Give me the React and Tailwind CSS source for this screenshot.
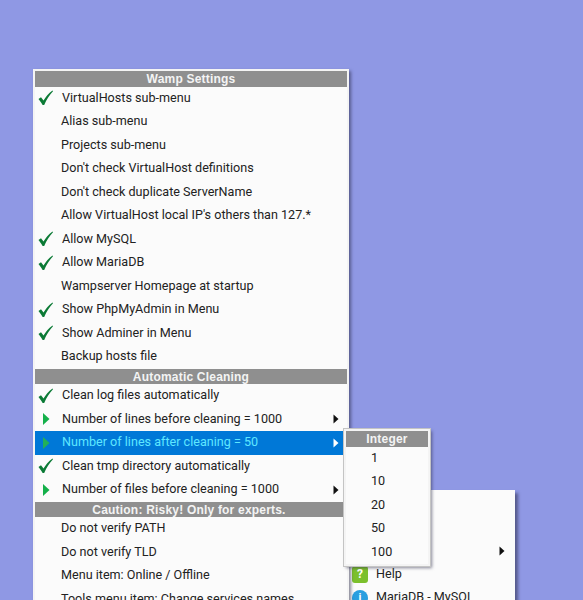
const Check = () => (
  <svg width="20" height="18" viewBox="0 0 20 18" className="block">
    <path d="M1.5 10 L4 8.2 L6.5 11.5 C8.5 8 11.5 4.5 15.5 1.5 L16 2.3 C12.5 6 9.5 10.5 7.2 16 L5.6 16 C4.6 14 3 11.8 1.5 10 Z" fill="#0b7a35" />
  </svg>
);
const Play = ({ dim }) => (
  <svg width="20" height="18" viewBox="0 0 20 18" className="block">
    <path d="M6 3 L12.5 9 L6 15 Z" fill={dim ? "#22b05a" : "#14b04a"} />
  </svg>
);
const Arrow = ({ white }) => (
  <svg width="6" height="10" viewBox="0 0 6 10" className="block">
    <path d="M0.5 0.5 L5.5 5 L0.5 9.5 Z" fill={white ? "#ffffff" : "#111111"} />
  </svg>
);

const Header = ({ children }) => (
  <div className="h-[15.5px] bg-[#8f8f8f] text-[#f4f4f4] text-center font-bold text-[12px] leading-[16px] tracking-[0.2px] font-['Liberation_Sans',sans-serif]">
    {children}
  </div>
);

const Item = ({ icon, label, arrow, active }) => (
  <div className={`h-[23.5px] flex items-center ${active ? "bg-[#0078d7] text-[#5fe7ff]" : "text-[#222222]"}`}>
    <div className="w-[26px] pl-[2px] shrink-0">
      {icon === "check" && <Check />}
      {icon === "play" && <Play dim={active} />}
    </div>
    <span className={`flex-1 whitespace-nowrap ${icon ? "pl-[1px]" : "pl-0"}`}>{label}</span>
    {arrow && <div className="pr-[4px]"><Arrow white={active} /></div>}
  </div>
);

const first = [
  ["check", "VirtualHosts sub-menu"],
  [null, "Alias sub-menu"],
  [null, "Projects sub-menu"],
  [null, "Don't check VirtualHost definitions"],
  [null, "Don't check duplicate ServerName"],
  [null, "Allow VirtualHost local IP's others than 127.*"],
  ["check", "Allow MySQL"],
  ["check", "Allow MariaDB"],
  [null, "Wampserver Homepage at startup"],
  ["check", "Show PhpMyAdmin in Menu"],
  ["check", "Show Adminer in Menu"],
  [null, "Backup hosts file"],
];

const third = ["Do not verify PATH", "Do not verify TLD", "Menu item: Online / Offline", "Tools menu item: Change services names"];

const fontCls = "font-['Roboto',sans-serif] text-[12.6px]";

export default function App() {
  return (
    <div className={`relative w-[583px] h-[600px] overflow-hidden bg-[#8f98e4] ${fontCls}`}>
      {/* Back menu */}
      <div className="absolute left-[349px] top-[490px] w-[166px] h-[130px] pt-[2px] bg-[#fbfbfb] shadow-[3px_3px_3px_rgba(40,40,70,0.55)] flex flex-col text-[#222222]">
        <div className="h-[23.5px]" />
        <div className="h-[23.5px]" />
        <div className="h-[23.5px] flex items-center justify-end pr-[10px]"><Arrow /></div>
        <div className="h-[23.5px] flex items-center gap-[8px] pl-[3px]">
          <div className="w-[16px] h-[17px] rounded-[3px] bg-[#7cc02c] flex items-center justify-center text-white font-bold text-[12px] leading-none">?</div>
          <span>Help</span>
        </div>
        <div className="h-[23.5px] flex items-center gap-[8px] pl-[3px]">
          <div className="w-[16px] h-[16px] rounded-full bg-[#2a9fe0] flex items-center justify-center text-white font-bold text-[11px] leading-none">i</div>
          <span className="whitespace-nowrap">MariaDB - MySQL</span>
        </div>
      </div>

      {/* Main menu */}
      <div className="absolute left-[33px] top-[69px] w-[316px] h-[560px] bg-[#fbfbfb] border-2 border-[#f4f4f4] shadow-[2px_2px_3px_rgba(40,40,70,0.55)]">
        <Header>Wamp Settings</Header>
        {first.map(([icon, label]) => (
          <Item key={label} icon={icon} label={label} />
        ))}
        <Header>Automatic Cleaning</Header>
        <div className="w-[308px]">
          <Item icon="check" label="Clean log files automatically" />
          <Item icon="play" label="Number of lines before cleaning = 1000" arrow />
          <Item icon="play" label="Number of lines after cleaning = 50" arrow active />
          <Item icon="check" label="Clean tmp directory automatically" />
          <Item icon="play" label="Number of files before cleaning = 1000" arrow />
          <Header>Caution: Risky! Only for experts.</Header>
          {third.map((label) => (
            <Item key={label} label={label} />
          ))}
        </div>
      </div>

      {/* Submenu */}
      <div className="absolute left-[344px] top-[429px] w-[86px] bg-[#fbfbfb] border-2 border-[#f4f4f4] shadow-[0_0_0_1px_#c4c4c4,2px_2px_3px_rgba(40,40,70,0.55)]">
        <Header>Integer</Header>
        <div className="text-[#222222]">
          {["1", "10", "20", "50", "100"].map((n) => (
            <div key={n} className="h-[23.5px] flex items-center pl-[25px]">{n}</div>
          ))}
        </div>
      </div>
    </div>
  );
}
